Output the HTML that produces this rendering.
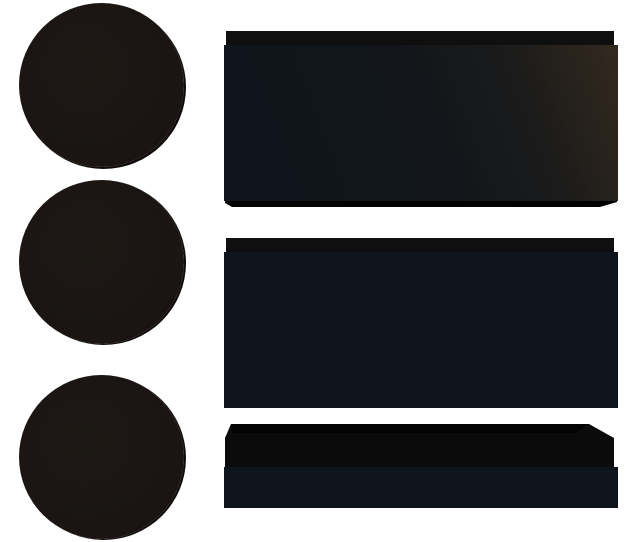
<!DOCTYPE html>
<html><head><style>
html,body{margin:0;padding:0;background:#fff;width:634px;height:542px;overflow:hidden;position:relative}
div{position:absolute}
.c{width:165px;height:164px;border-radius:50%;background:radial-gradient(circle at 40% 40%,#1d1815,#181311);}
</style></head><body>
<div class="c" style="left:19px;top:3px;box-shadow:2px 2px 0 #0e0b0a"></div>
<div class="c" style="left:19px;top:180px;box-shadow:2px 1px 0 #0e0b0a"></div>
<div class="c" style="left:19px;top:375px;box-shadow:2px 1px 0 #0e0b0a"></div>

<svg width="634" height="542" style="position:absolute;left:0;top:0">
<defs>
<linearGradient id="g1" x1="0" x2="1" y1="0.15" y2="0">
<stop offset="0" stop-color="#0f151c"/><stop offset="0.45" stop-color="#12161a"/><stop offset="0.72" stop-color="#1b1b1b"/><stop offset="1" stop-color="#33291e"/>
</linearGradient>
</defs>
<rect x="226" y="31" width="388" height="15" fill="#0f0f0f"/>
<polygon points="225,198 617,198 617,202 600,207 232,207 225,203" fill="#020202"/>
<rect x="224" y="45" width="394" height="156" fill="url(#g1)"/>

<rect x="226" y="238" width="388" height="15" fill="#0f0f0f"/>
<rect x="224" y="252" width="394" height="156" fill="#0f151c"/>

<polygon points="231,424 589,424 614,438 614,468 225,468 225,438" fill="#0b0b0b"/>
<polygon points="231,424 589,424 575,433 232,433" fill="#030303"/>
<rect x="224" y="467" width="394" height="41" fill="#0f151c"/>
</svg>
</body></html>
